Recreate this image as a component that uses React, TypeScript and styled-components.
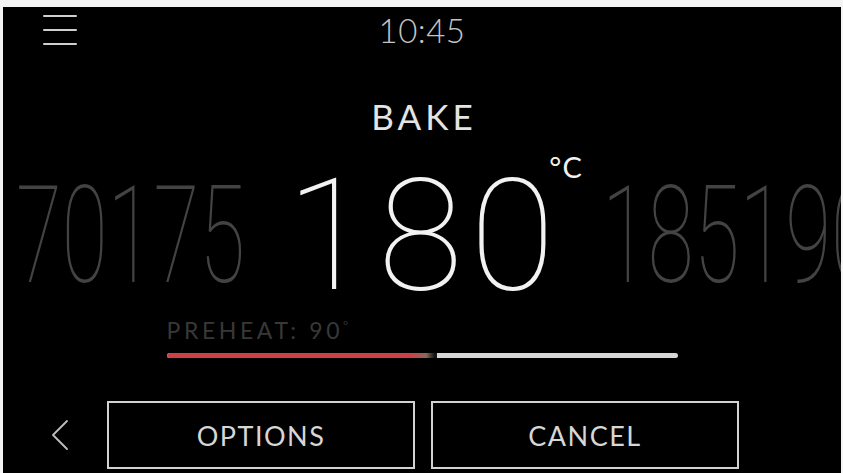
import React from 'react';
import styled, { createGlobalStyle } from 'styled-components';

const GlobalStyle = createGlobalStyle`
  html, body {
    margin: 0;
    padding: 0;
    background: #ffffff;
  }
  * {
    box-sizing: border-box;
  }
`;

const Frame = styled.div`
  width: 843px;
  height: 473px;
  padding: 7px 2px 0 3px;
  background: #f4f4f4;
`;

const Screen = styled.div`
  height: 466px;
  background: #000;
  display: flex;
  flex-direction: column;
  overflow: hidden;
  font-family: Lato, 'Open Sans', sans-serif;
  font-weight: 300;
`;

const Header = styled.header`
  height: 46px;
  display: grid;
  grid-template-columns: 1fr auto 1fr;
  align-items: center;
  padding: 0 40px;
`;

const MenuButton = styled.button`
  width: 34px;
  height: 30px;
  padding: 0;
  border: none;
  background: transparent;
  display: flex;
  flex-direction: column;
  justify-content: space-between;

  span {
    display: block;
    height: 2px;
    background: #cfcfcf;
    border-radius: 1px;
  }
`;

const Clock = styled.div`
  font-size: 33px;
  line-height: 46px;
  color: #c4c4c4;
  letter-spacing: 0.5px;
`;

const Title = styled.h1`
  height: 89px;
  margin: 0;
  padding-top: 43px;
  font-size: 35px;
  line-height: 40px;
  font-weight: 400;
  letter-spacing: 4px;
  text-indent: 4px;
  text-align: center;
  color: #e4e4e4;
`;

const Dial = styled.div`
  height: 176px;
  padding-top: 12px;
  display: grid;
  grid-template-columns: minmax(0, 1fr) auto minmax(0, 1fr);
  align-items: center;
  font-family: Roboto, 'Open Sans', sans-serif;
  font-weight: 100;
`;

const SideValues = styled.div<{ side: 'left' | 'right' }>`
  display: flex;
  justify-content: ${({ side }) => (side === 'left' ? 'flex-end' : 'flex-start')};
  overflow: hidden;
  padding: ${({ side }) => (side === 'left' ? '0 37px 0 0' : '0 0 0 40px')};

  span {
    flex-shrink: 0;
    font-size: 135px;
    line-height: 164px;
    color: #434343;
    white-space: nowrap;
    transform: scaleX(0.62);
    transform-origin: ${({ side }) => (side === 'left' ? 'right' : 'left')} center;
  }
`;

const Current = styled.div`
  position: relative;
  font-size: 155px;
  line-height: 164px;
  color: #f2f2f2;
  letter-spacing: 7px;
  text-indent: 4px;
`;

const Unit = styled.span`
  position: absolute;
  top: -2px;
  right: -21px;
  font-family: Lato, sans-serif;
  font-weight: 400;
  font-size: 29px;
  line-height: 30px;
  text-indent: 0;
  color: #f2f2f2;
  letter-spacing: 1px;
`;

const Preheat = styled.section`
  width: 511px;
  margin: 0 auto;
`;

const PreheatLabel = styled.div`
  font-size: 23px;
  line-height: 24px;
  letter-spacing: 3.6px;
  color: #383838;
  font-weight: 400;

  sup {
    font-size: 12px;
    vertical-align: top;
    position: relative;
    top: -4px;
  }
`;

const Track = styled.div`
  height: 5px;
  margin-top: 11px;
  border-radius: 3px;
  background: #d6d6d6;
  position: relative;
  overflow: hidden;
`;

const Fill = styled.div`
  height: 100%;
  border-radius: 3px 0 0 3px;
  background: linear-gradient(
    to right,
    #cf3f47 0%,
    #cf3f47 90%,
    #8a6a5a 96%,
    #141414 99%,
    #141414 100%
  );
`;

const Footer = styled.footer`
  margin-top: auto;
  height: 72px;
  padding: 0 0 4px 48px;
  display: flex;
  align-items: center;
  gap: 16px;
`;

const BackButton = styled.button`
  width: 40px;
  height: 40px;
  padding: 0;
  border: none;
  background: transparent;
  display: flex;
  align-items: center;
`;

const ActionButton = styled.button`
  width: 308px;
  height: 68px;
  border: 2px solid #d2d2d2;
  background: #000;
  color: #d6d6d6;
  font-family: Lato, 'Open Sans', sans-serif;
  font-weight: 400;
  font-size: 27px;
  letter-spacing: 1.5px;
`;

export default function App() {
  return (
    <>
      <GlobalStyle />
      <Frame>
        <Screen>
          <Header>
            <MenuButton aria-label="Menu">
              <span />
              <span />
              <span />
            </MenuButton>
            <Clock>10:45</Clock>
          </Header>

          <Title>BAKE</Title>

          <Dial>
            <SideValues side="left">
              <span>165170175</span>
            </SideValues>
            <Current>
              180
              <Unit>°C</Unit>
            </Current>
            <SideValues side="right">
              <span>185190195</span>
            </SideValues>
          </Dial>

          <Preheat>
            <PreheatLabel>
              PREHEAT: 90<sup>°</sup>
            </PreheatLabel>
            <Track>
              <Fill style={{ width: `${(270 / 511) * 100}%` }} />
            </Track>
          </Preheat>

          <Footer>
            <BackButton aria-label="Back">
              <svg width="18" height="32" viewBox="0 0 18 32" fill="none">
                <polyline
                  points="16,2 2,16 16,30"
                  stroke="#bdbdbd"
                  strokeWidth="1.8"
                  strokeLinecap="round"
                  strokeLinejoin="round"
                />
              </svg>
            </BackButton>
            <ActionButton>OPTIONS</ActionButton>
            <ActionButton>CANCEL</ActionButton>
          </Footer>
        </Screen>
      </Frame>
    </>
  );
}
